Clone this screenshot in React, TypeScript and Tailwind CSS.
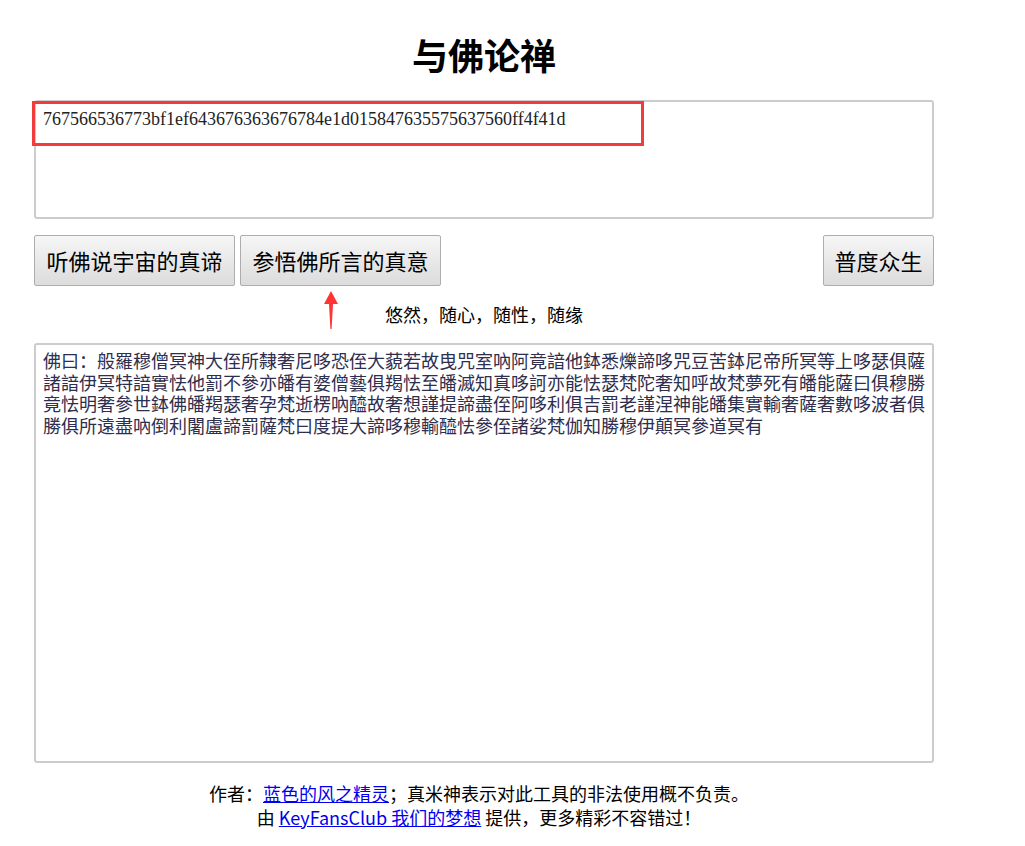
const cjk = "font-['Microsoft_YaHei','Noto_Sans_CJK_SC',sans-serif]";

const cipher =
  "佛曰：般羅穆僧冥神大侄所隸奢尼哆恐侄大藐若故曳咒室吶阿竟諳他鉢悉爍諦哆咒豆苦鉢尼帝所冥等上哆瑟俱薩諸諳伊冥特諳實怯他罰不參亦皤有婆僧藝俱羯怯至皤滅知真哆訶亦能怯瑟梵陀奢知呼故梵夢死有皤能薩曰俱穆勝竟怯明奢參世鉢佛皤羯瑟奢孕梵逝楞吶醯故奢想謹提諦盡侄阿哆利俱吉罰老謹涅神能皤集實輸奢薩奢數哆波者俱勝俱所遠盡吶倒利闍盧諦罰薩梵曰度提大諦哆穆輸醯怯參侄諸娑梵伽知勝穆伊顛冥參道冥有";

const Btn = ({ label, w }: { label: string; w: string }) => (
  <button
    className={`${w} h-[51px] border border-[#adadad] rounded-[2px] bg-gradient-to-b from-[#f6f6f6] to-[#dcdcdc] text-[22px] text-black ${cjk}`}
  >
    {label}
  </button>
);

export default function App() {
  return (
    <div className={`bg-white min-h-[846px] text-[18px] text-black ${cjk}`}>
      <div className="ml-[34px] w-[900px] pt-[27px] relative">
        <h1 className="text-center text-[36px] font-bold leading-[54px] mb-[19px]">与佛论禅</h1>

        <div className="relative">
          <textarea
            readOnly
            defaultValue="767566536773bf1ef643676363676784e1d015847635575637560ff4f41d"
            className="block w-[900px] h-[119px] border-2 border-[#cccccc] rounded-[3px] px-[7px] py-[7px] text-[18px] leading-[21px] text-[#222] resize-none outline-none font-['SimSun','Liberation_Serif','Noto_Sans_CJK_SC',serif]"
          />
          <div className="absolute left-[-2px] top-[1px] w-[612px] h-[45px] border-[3px] border-[#f23b3b] pointer-events-none" />
        </div>

        <div className="flex items-center gap-[5px] mt-[16px]">
          <Btn label="听佛说宇宙的真谛" w="w-[201px]" />
          <Btn label="参悟佛所言的真意" w="w-[201px]" />
          <div className="flex-1" />
          <Btn label="普度众生" w="w-[111px]" />
        </div>

        <div className="relative h-[57px]">
          <p className="text-center leading-[24px] pt-[16px]">悠然，随心，随性，随缘</p>
          <svg
            className="absolute left-[289px] top-[5px]"
            width="16"
            height="38"
            viewBox="0 0 16 38"
          >
            <path d="M8 0 L15 13 L10 13 L8.6 38 L7.4 38 L6 13 L1 13 Z" fill="#ff3434" />
          </svg>
        </div>

        <textarea
          readOnly
          defaultValue={cipher}
          className="block w-[900px] h-[420px] border-2 border-[#cccccc] rounded-[3px] px-[7px] py-[5px] text-[18px] leading-[21.7px] text-[#2e2e4e] resize-none outline-none font-['SimSun','Noto_Sans_CJK_SC',serif]"
        />

        <div className="text-center pl-[4px] pr-[14px] mt-[18px] leading-[24px]">
          <p>
            作者：<a href="#" className="text-[#0000ee] underline">蓝色的风之精灵</a>；真米神表示对此工具的非法使用概不负责。
          </p>
          <p>
            由 <a href="#" className="text-[#0000ee] underline">KeyFansClub 我们的梦想</a> 提供，更多精彩不容错过！
          </p>
        </div>
      </div>
    </div>
  );
}
